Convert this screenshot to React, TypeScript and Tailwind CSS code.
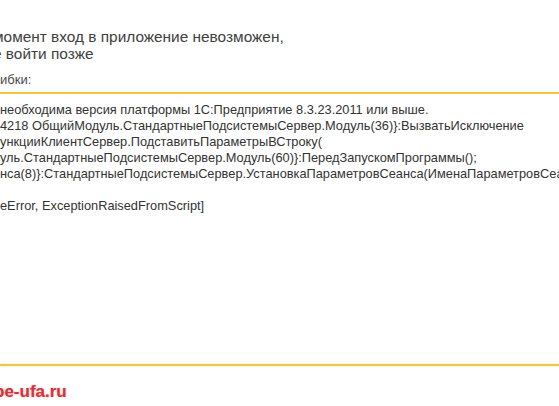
const errorLines = [
  'необходима версия платформы 1С:Предприятие 8.3.23.2011 или выше.',
  '4218 ОбщийМодуль.СтандартныеПодсистемыСервер.Модуль(36)}:ВызватьИсключение',
  'ункцииКлиентСервер.ПодставитьПараметрыВСтроку(',
  'уль.СтандартныеПодсистемыСервер.Модуль(60)}:ПередЗапускомПрограммы();',
  'нса(8)}:СтандартныеПодсистемыСервер.УстановкаПараметровСеанса(ИменаПараметровСеанса);',
  '\u00a0',
  'eError, ExceptionRaisedFromScript]',
];

export default function App() {
  return (
    <div
      className="w-[559px] h-[406px] overflow-hidden bg-white text-[#404040]"
      style={{ fontFamily: '"Liberation Sans", Arial, sans-serif' }}
    >
      {/* Message */}
      <div className="pt-[28px] text-[15.4px] leading-[17px] whitespace-nowrap">
        <div className="-ml-[7px]">момент вход в приложение невозможен,</div>
        <div className="-ml-[7px]">е войти позже</div>
      </div>

      <div className="mt-[10px] text-[13px] leading-[15px] text-[#4a4a4a] whitespace-nowrap">
        ибки:
      </div>

      {/* Error details */}
      <div className="mt-[5px] border-t-2 border-[#f2c83c] pt-[8px] h-[272px] text-[12.8px] leading-[16px] text-[#333] whitespace-nowrap">
        {errorLines.map((line, i) => (
          <div key={i}>{line}</div>
        ))}
      </div>

      <div className="h-[2px] bg-[#e9c952] shadow-[0_0_3px_rgba(240,210,80,0.6)]" />

      {/* Watermark */}
      <div className="mt-[17px] -ml-[6px] text-[17px] leading-[18px] font-bold text-[#d3353d] [text-shadow:0_0_2px_rgba(200,40,40,0.45)] whitespace-nowrap">
        be-ufa.ru
      </div>
    </div>
  );
}
